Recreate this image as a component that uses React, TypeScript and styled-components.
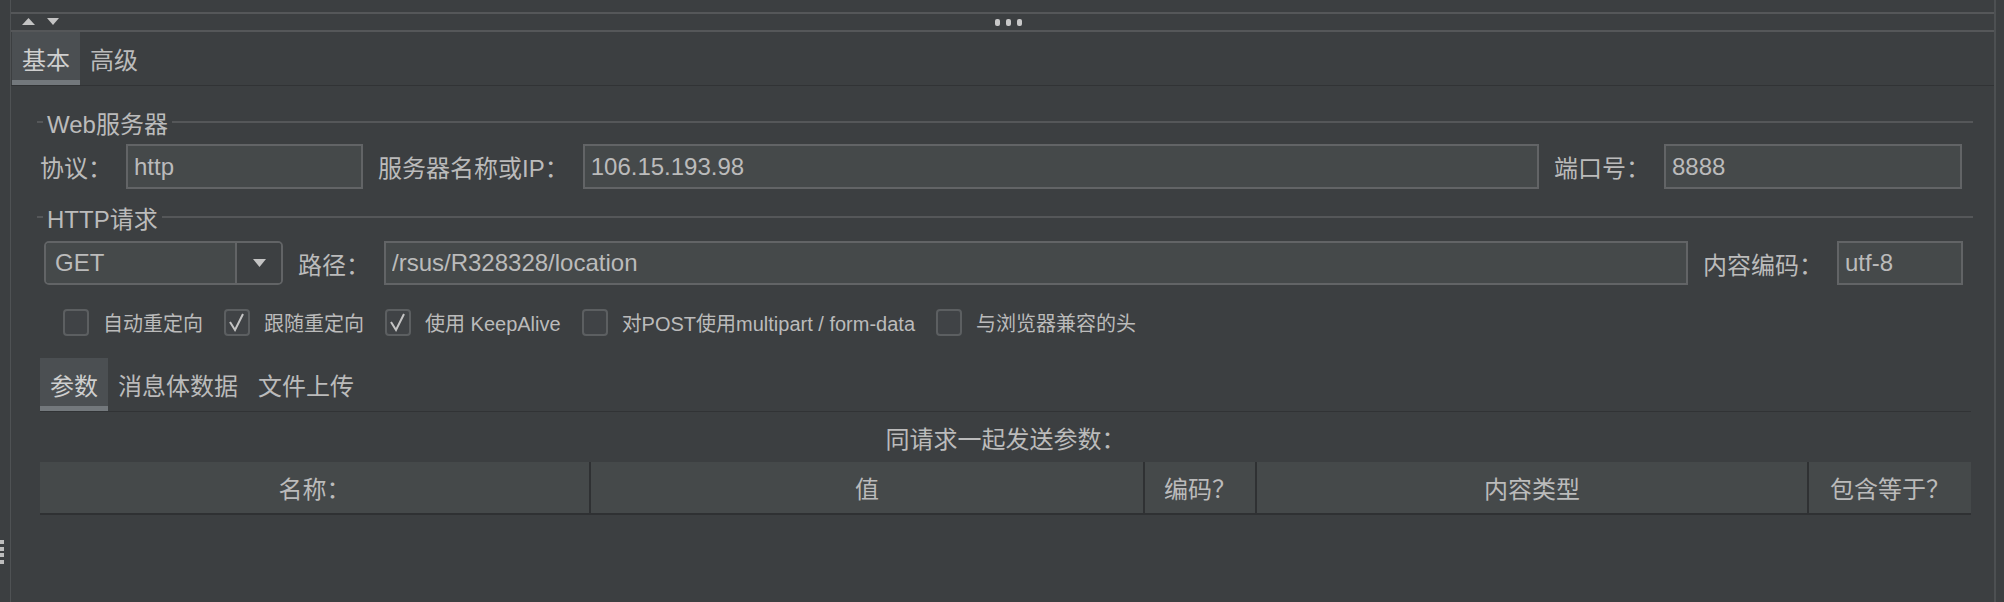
import { createGlobalStyle, styled } from 'styled-components';

const colors = {
  bg: '#3c3f41',
  text: '#bbbbbb',
  line: '#555759',
  dark: '#2f3133',
  field: '#45494a',
  fieldBorder: '#626466',
  tabSelected: '#4b4f52',
  tabMark: '#73787c',
};

const GlobalStyle = createGlobalStyle`
  html, body {
    margin: 0;
    background: ${colors.bg};
  }

  body {
    font-family: 'Liberation Sans', 'Noto Sans CJK SC', sans-serif;
    color: ${colors.text};
  }
`;

const Frame = styled.div`
  display: flex;
  width: 2004px;
  height: 602px;
  overflow: hidden;
  background: ${colors.bg};
`;

const Gutter = styled.div`
  flex: none;
  width: 10px;
  border-right: 1px solid #4f5254;
  display: flex;
  align-items: flex-end;
  padding-bottom: 38px;
  box-sizing: content-box;
`;

const RightEdge = styled.div`
  flex: none;
  width: 8px;
  border-left: 2px solid #4d5052;
`;

const Main = styled.div`
  flex: 1;
  min-width: 0;
  display: flex;
  flex-direction: column;
`;

const TopSpace = styled.div`
  height: 12px;
`;

const Splitter = styled.div`
  height: 16px;
  border-top: 2px solid ${colors.line};
  border-bottom: 2px solid ${colors.line};
  display: grid;
  grid-template-columns: 1fr auto 1fr;
  align-items: center;
  padding-left: 11px;
`;

const TabBar = styled.div`
  height: 53px;
  display: flex;
  border-bottom: 1px solid #313335;
  padding-left: ${(props: { $inset?: number }) => props.$inset ?? 0}px;
`;

const Tab = styled.div<{ $active?: boolean }>`
  display: flex;
  align-items: center;
  padding: 0 10px;
  font-size: 24px;
  white-space: nowrap;
  color: ${(props) => (props.$active ? '#cfcfcf' : colors.text)};
  background: ${(props) => (props.$active ? colors.tabSelected : 'transparent')};
  box-shadow: ${(props) =>
    props.$active ? `inset 0 -5px 0 ${colors.tabMark}` : 'none'};
`;

const Content = styled.div`
  display: flex;
  flex-direction: column;
  padding: 0 21px 0 26px;
`;

const SectionTitle = styled.div<{ $top: number }>`
  margin-top: ${(props) => props.$top}px;
  height: 28px;
  display: flex;
  align-items: center;
  font-size: 24px;
  white-space: nowrap;

  &::before {
    content: '';
    width: 6px;
    height: 2px;
    margin-right: 4px;
    background: ${colors.line};
  }

  &::after {
    content: '';
    flex: 1;
    height: 2px;
    margin-left: 4px;
    background: ${colors.line};
  }
`;

const FieldRow = styled.div<{ $top: number; $height: number; $left: number; $right: number }>`
  margin-top: ${(props) => props.$top}px;
  height: ${(props) => props.$height}px;
  display: flex;
  align-items: center;
  gap: 14px;
  padding: 0 ${(props) => props.$right}px 0 ${(props) => props.$left}px;
`;

const Label = styled.span<{ $after?: boolean }>`
  flex: none;
  font-size: 24px;
  white-space: nowrap;
  margin-left: ${(props) => (props.$after ? 1 : 0)}px;
`;

const Field = styled.input<{ $width?: number }>`
  box-sizing: border-box;
  height: 100%;
  flex: ${(props) => (props.$width ? `0 0 ${props.$width}px` : '1 1 0')};
  min-width: 0;
  margin: 0;
  padding: 0 6px;
  background: ${colors.field};
  border: 2px solid ${colors.fieldBorder};
  border-radius: 0;
  color: ${colors.text};
  font-family: inherit;
  font-size: 24px;
  outline: none;
`;

const Combo = styled.div`
  flex: 0 0 239px;
  box-sizing: border-box;
  height: 100%;
  display: flex;
  border: 2px solid ${colors.fieldBorder};
  border-radius: 5px;
  overflow: hidden;
`;

const ComboValue = styled.div`
  flex: 1;
  display: flex;
  align-items: center;
  padding-left: 9px;
  background: ${colors.field};
  font-size: 24px;
`;

const ComboButton = styled.div`
  flex: 0 0 44px;
  display: flex;
  align-items: center;
  justify-content: center;
  border-left: 2px solid ${colors.fieldBorder};
  background: #3d4042;
`;

const CheckRow = styled.div`
  margin-top: 23px;
  height: 28px;
  display: flex;
  align-items: center;
  gap: 21px;
  padding-left: 26px;
`;

const CheckItem = styled.label`
  display: flex;
  align-items: center;
  gap: 14px;
  font-size: 20px;
  white-space: nowrap;
`;

const Box = styled.span`
  box-sizing: border-box;
  width: 26px;
  height: 27px;
  border: 2px solid #5c5f61;
  border-radius: 4px;
  background: #404346;
  display: flex;
  align-items: center;
  justify-content: center;
`;

const SubPanel = styled.div`
  margin: 22px 2px 0 3px;
  display: flex;
  flex-direction: column;
`;

const Caption = styled.div`
  height: 50px;
  display: flex;
  align-items: center;
  justify-content: center;
  font-size: 24px;
`;

const HeaderRow = styled.div`
  display: grid;
  grid-template-columns: 551px 554px 112px 552px 162px;
  height: 51px;
  background: ${colors.field};
  border-bottom: 2px solid ${colors.dark};
`;

const HeaderCell = styled.div<{ $last?: boolean }>`
  display: flex;
  align-items: center;
  justify-content: center;
  font-size: 24px;
  white-space: nowrap;
  border-right: ${(props) => (props.$last ? 'none' : `2px solid ${colors.dark}`)};
`;

const Arrows = () => (
  <svg width="40" height="8" viewBox="0 0 40 8">
    <polygon points="0,7 6.5,0 13,7" fill="#c4c4c4" />
    <polygon points="25,0 37,0 31,7" fill="#c4c4c4" />
  </svg>
);

const Dots = () => (
  <svg width="27" height="7" viewBox="0 0 27 7">
    <rect x="0" y="0" width="5" height="7" rx="2" fill="#c8c8c8" />
    <rect x="11" y="0" width="5" height="7" rx="2" fill="#c8c8c8" />
    <rect x="22" y="0" width="5" height="7" rx="2" fill="#c8c8c8" />
  </svg>
);

const Grip = () => (
  <svg width="5" height="24" viewBox="0 0 5 24">
    <rect x="0" y="0" width="4" height="4" fill="#bdbdbd" />
    <rect x="0" y="7" width="4" height="4" fill="#bdbdbd" />
    <rect x="0" y="13" width="4" height="4" fill="#bdbdbd" />
    <rect x="0" y="20" width="4" height="4" fill="#bdbdbd" />
  </svg>
);

const DownArrow = () => (
  <svg width="13" height="8" viewBox="0 0 13 8">
    <polygon points="0,0 13,0 6.5,8" fill="#c4c4c4" />
  </svg>
);

const Check = () => (
  <svg width="22" height="23" viewBox="0 0 22 23">
    <path d="M4 11 L9 19 L17 3" fill="none" stroke="#c4c4c4" strokeWidth="2" />
  </svg>
);

const options = [
  { label: '自动重定向', checked: false },
  { label: '跟随重定向', checked: true },
  { label: '使用 KeepAlive', checked: true },
  { label: '对POST使用multipart / form-data', checked: false },
  { label: '与浏览器兼容的头', checked: false },
];

const columns = ['名称：', '值', '编码？', '内容类型', '包含等于？'];

export default function App() {
  return (
    <>
      <GlobalStyle />
      <Frame>
        <Gutter>
          <Grip />
        </Gutter>
        <Main>
          <TopSpace />
          <Splitter>
            <Arrows />
            <Dots />
            <span />
          </Splitter>
          <TabBar $inset={1}>
            <Tab $active>基本</Tab>
            <Tab>高级</Tab>
          </TabBar>
          <Content>
            <SectionTitle $top={22}>Web服务器</SectionTitle>
            <FieldRow $top={8} $height={45} $left={3} $right={11}>
              <Label>协议：</Label>
              <Field $width={237} readOnly value="http" />
              <Label $after>服务器名称或IP：</Label>
              <Field readOnly value="106.15.193.98" />
              <Label $after>端口号：</Label>
              <Field $width={298} readOnly value="8888" />
            </FieldRow>

            <SectionTitle $top={14}>HTTP请求</SectionTitle>
            <FieldRow $top={10} $height={44} $left={7} $right={10}>
              <Combo>
                <ComboValue>GET</ComboValue>
                <ComboButton>
                  <DownArrow />
                </ComboButton>
              </Combo>
              <Label $after>路径：</Label>
              <Field readOnly value="/rsus/R328328/location" />
              <Label $after>内容编码：</Label>
              <Field $width={126} readOnly value="utf-8" />
            </FieldRow>

            <CheckRow>
              {options.map((option) => (
                <CheckItem key={option.label}>
                  <Box>{option.checked ? <Check /> : null}</Box>
                  {option.label}
                </CheckItem>
              ))}
            </CheckRow>

            <SubPanel>
              <TabBar>
                <Tab $active>参数</Tab>
                <Tab>消息体数据</Tab>
                <Tab>文件上传</Tab>
              </TabBar>
              <Caption>同请求一起发送参数：</Caption>
              <HeaderRow>
                {columns.map((name, i) => (
                  <HeaderCell key={name} $last={i === columns.length - 1}>
                    {name}
                  </HeaderCell>
                ))}
              </HeaderRow>
            </SubPanel>
          </Content>
        </Main>
        <RightEdge />
      </Frame>
    </>
  );
}
